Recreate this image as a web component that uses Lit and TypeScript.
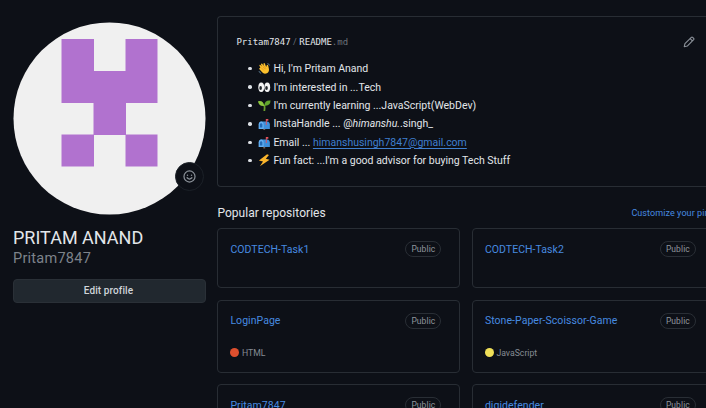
import { LitElement, html, css, svg, nothing } from "lit";
import { customElement, property } from "lit/decorators.js";

type Repo = { name: string; lang?: string; color?: string };

const repos: Repo[] = [
  { name: "CODTECH-Task1" },
  { name: "CODTECH-Task2" },
  { name: "LoginPage", lang: "HTML", color: "#dd4f2e" },
  { name: "Stone-Paper-Scoissor-Game", lang: "JavaScript", color: "#efdf58" },
  { name: "Pritam7847" },
  { name: "digidefender" },
];

const mailbox = svg`
  <path d="M5 5.500h9.500Q19 6 19 10.500v7H2V11Q2 6 5 5.500z" fill="#3f8fdc"/>
  <path d="M1 17.500V10.500Q1.300 5.500 5 5.500t4 5v7z" fill="#64b0f4"/>
  <path d="M3 15V10.500Q3.300 8.500 5 8.500t2 2V15z" fill="#2369b5"/>
  <path d="M8.500 17.500h3V20h-3z" fill="#7b6257"/>
  <path d="M12.500 11V1.500h4v3h-2.500V11z" fill="#e0525e"/>`;

const icons = {
  wave: svg`
    <path d="M3.500 8.500L2.200 5.800Q2 4.200 3.600 4.500L6 7.300 4.700 3.500Q5.300 1.800 6.800 2.700L9.200 6.500 8.700 2.600Q9.800 1 11 2.500L13 8l1-2.800Q15.800 3.500 16.300 5.500l1.300 6Q18 17 13 18.500q-4 1-6.300-2L2 11Q1.500 9.300 3.500 9.500z" fill="#fbc02d"/>
    <path d="M5 9l4.500 4.500M7.500 7l3.800 4.800M10 6.500l2.600 4.300" stroke="#dc8e18" stroke-width="1" fill="none"/>
    <path d="M15 2.500q3 .5 3.500 3M1.500 14.500q.8 3 3.500 3.500" stroke="#7196ad" stroke-width="1.200" fill="none"/>`,
  eyes: svg`
    <ellipse cx="5.200" cy="10" rx="4.700" ry="7.500" fill="#f5f5f5"/>
    <ellipse cx="14.800" cy="10" rx="4.700" ry="7.500" fill="#f5f5f5"/>
    <ellipse cx="4.200" cy="11" rx="2.100" ry="3.200" fill="#22272b"/>
    <ellipse cx="13.600" cy="11" rx="2.100" ry="3.200" fill="#22272b"/>`,
  seedling: svg`
    <path d="M8.700 19q1-5 0-10h2.800q1 5 0 10z" fill="#6a9e2d"/>
    <path d="M10 11Q1 12 0 3.500 8.500 1.500 10 11z" fill="#8cc63f"/>
    <path d="M10.300 10.500Q10.500 1.500 20 2.500q0 9-9.700 8z" fill="#62a52d"/>`,
  mailbox,
  bolt: svg`<path d="M14.500 .5L1.500 10.500l6.500 1.300L3 19.500 18.500 9l-6-1.300L17.500 1.500z" fill="#fbb52c"/>`,
};

@customElement("note-line")
export class NoteLine extends LitElement {
  @property() icon: keyof typeof icons = "wave";
  static styles = css`
    :host { display: flex; align-items: center; height: 18.400px; white-space: nowrap; }
    .dot { width: 3.500px; height: 3.500px; border-radius: 50%; background: #dce0e4; margin-right: 6.500px; }
    svg { width: 12.500px; height: 12.500px; margin-right: 2.500px; }
  `;
  render() {
    return html`<span class="dot"></span><svg viewBox="0 0 20 20">${icons[this.icon]}</svg><span><slot></slot></span>`;
  }
}

@customElement("repo-card")
export class RepoCard extends LitElement {
  @property({ attribute: false }) repo!: Repo;
  static styles = css`
    :host {
      display: flex; flex-direction: column; justify-content: space-between;
      box-sizing: border-box; border: 1px solid #282d34; border-radius: 4px;
      padding: 12px 18px 13px 12px;
    }
    .top { display: flex; justify-content: space-between; align-items: center; height: 16px; }
    .name { font-size: 10.500px; letter-spacing: 0.050px; color: #478be0; }
    .badge {
      box-sizing: border-box; width: 36px; height: 16px; border: 1px solid #292e35; border-radius: 8px;
      display: flex; align-items: center; justify-content: center;
      font-size: 8.500px; letter-spacing: 0.100px; color: #8f959c;
    }
    .lang { display: flex; align-items: center; gap: 2.500px; height: 12px; font-size: 8.700px; color: #858b93; }
    .swatch { width: 9px; height: 9px; border-radius: 50%; }
  `;
  render() {
    const { name, lang, color } = this.repo;
    return html`
      <div class="top"><span class="name">${name}</span><span class="badge">Public</span></div>
      ${lang
        ? html`<div class="lang"><span class="swatch" style="background:${color}"></span>${lang}</div>`
        : nothing}
    `;
  }
}

@customElement("app-root")
export class AppRoot extends LitElement {
  static styles = css`
    :host {
      display: grid; grid-template-columns: 193px 498px; column-gap: 11.400px;
      box-sizing: border-box; width: 706px; height: 408px; overflow: hidden;
      padding: 16px 0 0 13px; background: #0d1017; color: #e2e6ea;
      font-family: Roboto, sans-serif;
    }
    .side { padding-top: 6px; }
    .avatar { position: relative; width: 193px; height: 193px; }
    .avatar .pic { display: block; width: 193px; height: 193px; }
    .status {
      position: absolute; left: 162px; top: 140px; width: 29px; height: 29px; box-sizing: border-box;
      border: 1px solid #1c2128; border-radius: 50%; background: #0d1017;
      display: flex; align-items: center; justify-content: center;
    }
    .status svg { width: 13px; height: 13px; }
    .full { margin-top: 12px; font-size: 18px; line-height: 22px; white-space: nowrap; }
    .login { font-size: 14.500px; line-height: 19px; color: #7d838b; letter-spacing: 0.250px; }
    .edit {
      display: flex; align-items: center; justify-content: center; box-sizing: border-box;
      width: 193px; height: 24px; margin-top: 11px; border: 1px solid #2a3037; border-radius: 4px;
      background: #21282f; color: #cfd4da; font: 500 10px Roboto, sans-serif; padding: 0 2px 1px 0;
      letter-spacing: 0.100px;
    }
    .main { width: 498px; }
    .readme {
      box-sizing: border-box; height: 171px; border: 1px solid #282d34; border-right: 0;
      border-radius: 4px 0 0 4px; padding: 17px 11px 0 18px; width: 488.600px;
    }
    .path { display: flex; justify-content: space-between; align-items: center; height: 15px; font: 9px "DejaVu Sans Mono", monospace; }
    .path svg { width: 12px; height: 12px; }
    .path .sep { font-family: Roboto, sans-serif; color: #6b7179; margin: 0 2.500px; }
    .path .ext { color: #6b7179; }
    .notes { padding: 10.500px 0 0 12px; font-size: 10.500px; }
    .mail { color: #3f7fcf; text-decoration: underline; text-underline-offset: 2px; }
    .head { display: flex; justify-content: space-between; align-items: center; height: 20px; margin-top: 16px; white-space: nowrap; }
    .head h2 { margin: 0; font-size: 12px; font-weight: 400; letter-spacing: 0.050px; }
    .head .pins { width: 84px; font-size: 9px; letter-spacing: 0.080px; color: #478be0; }
    .grid {
      display: grid; grid-template-columns: 243px 243px; grid-template-rows: 60px 73px 60px;
      column-gap: 11.500px; row-gap: 11.500px; margin-top: 5.400px;
    }
  `;
  render() {
    return html`
      <div class="side">
        <div class="avatar">
          <svg class="pic" viewBox="0 0 193 193">
            <circle cx="96.500" cy="96.500" r="96" fill="#f0f0f0" />
            <path fill="#b172cf" d="M48.500 17h32.500v32h31.500V17h32v64h-31.500v32h-32.500V81H48.500zM48.500 112.500h32.500v32H48.500zM112.500 112.500h32v32h-32z" />
          </svg>
          <div class="status">
            <svg viewBox="0 0 16 16" fill="none" stroke="#8b9199" stroke-width="1.500">
              <circle cx="8" cy="8" r="6.800" /><path d="M5 9.500q3 3.200 6 0" stroke-linecap="round" />
              <circle cx="5.500" cy="6.500" r=".9" fill="#8b9199" stroke="none" /><circle cx="10.500" cy="6.500" r=".9" fill="#8b9199" stroke="none" />
            </svg>
          </div>
        </div>
        <div class="full">PRITAM ANAND</div>
        <div class="login">Pritam7847</div>
        <button class="edit">Edit profile</button>
      </div>
      <div class="main">
        <div class="readme">
          <div class="path">
            <span>Pritam7847<span class="sep">/</span>README<span class="ext">.md</span></span>
            <svg viewBox="0 0 16 16" fill="none" stroke="#8b9199" stroke-width="1.500" stroke-linejoin="round">
              <path d="M1.700 14.300l.9-4 8.500-8.500q.9-.8 1.800 0l1.300 1.300q.8.900 0 1.800l-8.500 8.500zM9.500 3.500l3 3" />
            </svg>
          </div>
          <div class="notes">
            <note-line icon="wave">Hi, I'm Pritam Anand</note-line>
            <note-line icon="eyes">I'm interested in ...Tech</note-line>
            <note-line icon="seedling">I'm currently learning ...JavaScript(WebDev)</note-line>
            <note-line icon="mailbox">InstaHandle ... @<i>himanshu.</i>.singh_</note-line>
            <note-line icon="mailbox">Email ... <span class="mail">himanshusingh7847@gmail.com</span></note-line>
            <note-line icon="bolt">Fun fact: ...I'm a good advisor for buying Tech Stuff</note-line>
          </div>
        </div>
        <div class="head"><h2>Popular repositories</h2><span class="pins">Customize your pins</span></div>
        <div class="grid">${repos.map((r) => html`<repo-card .repo=${r}></repo-card>`)}</div>
      </div>
    `;
  }
}
